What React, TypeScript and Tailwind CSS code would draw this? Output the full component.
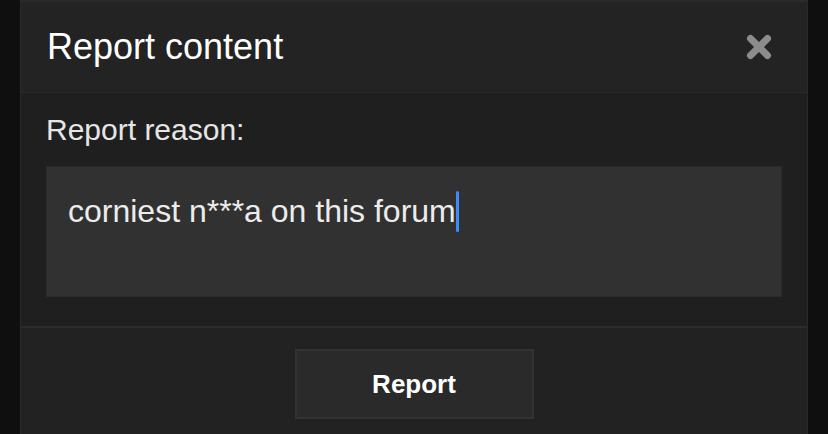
export default function App() {
  return (
    <div className="min-h-[434px] bg-[#0f0f0f] px-[20px] font-['Liberation_Sans',Arial,sans-serif]">
      <div className="min-h-[434px] border-x border-t-2 border-[#2a2a2a] bg-[#232323] flex flex-col">
        {/* header */}
        <div className="h-[91px] flex items-center justify-between pl-[26px] pr-[35px] border-b border-[#2b2b2b]">
          <h2 className="text-[36px] leading-none text-white">Report content</h2>
          <button className="w-[26px] h-[26px] flex items-center justify-center">
            <svg width="26" height="26" viewBox="0 0 26 26" fill="none">
              <path d="M4.5 4.5L21.5 21.5M21.5 4.5L4.5 21.5" stroke="#8c8c8c" strokeWidth="7" strokeLinecap="round" />
            </svg>
          </button>
        </div>

        {/* body */}
        <div className="bg-[#1f1f1f] px-[25px] pt-[22px] pb-[29px] border-b-2 border-[#2c2c2c]">
          <label className="block text-[30px] leading-[30px] text-[#e6e6e6]">Report reason:</label>
          <div className="mt-[21px] h-[131px] bg-[#313131] border border-[#2a2a2a] px-[21px] pt-[23px]">
            <div className="flex items-center text-[32px] leading-[42px] text-[#ececec]">
              <span>corniest n***a on this forum</span>
              <span className="inline-block w-[3px] h-[41px] bg-[#3a8cff] rounded-full" />
            </div>
          </div>
        </div>

        {/* footer */}
        <div className="flex-1 bg-[#222222] flex justify-center pt-[21px]">
          <button className="w-[239px] h-[70px] bg-[#2a2a2a] border-2 border-[#333333] text-[26px] font-bold text-white">
            Report
          </button>
        </div>
      </div>
    </div>
  );
}
